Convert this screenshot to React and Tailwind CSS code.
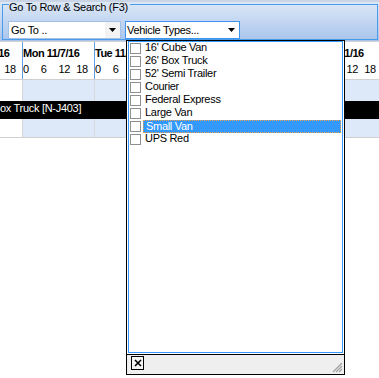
import { useState } from "react";

const days = ["Sun 11/6/16", "Mon 11/7/16", "Tue 11/8/16", "Wed 11/9/16", "Thu 11/10/16", "Fri 11/11/16", "Sat 11/12/16"];
const hours = ["0", "6", "12", "18"];
const vehicleTypes = ["16' Cube Van", "26' Box Truck", "52' Semi Trailer", "Courier", "Federal Express", "Large Van", "Small Van", "UPS Red"];

function Arrow() {
    return (
        <svg width="7" height="4" viewBox="0 0 7 4">
            <path d="M0 0h7L3.5 4z" fill="#000" />
        </svg>
    );
}

function DayStrip({ height }) {
    return (
        <div className={"flex -ml-[50px] " + height}>
            {days.map((d, i) => (
                <div
                    key={d}
                    className={
                        "w-[72px] shrink-0 border-l border-[#d9d9d9] " +
                        (i === 0 ? "bg-white" : "bg-[#dde9f8]")
                    }
                />
            ))}
        </div>
    );
}

export default function App() {
    const [selected, setSelected] = useState(6);
    const [checked, setChecked] = useState({});

    return (
        <div
            className="relative w-[379px] h-[378px] overflow-hidden bg-white text-[11px] tracking-[-0.3px] text-black"
            style={{ fontFamily: '"Liberation Sans", Arial, sans-serif' }}
        >
            {/* search panel */}
            <div className="h-[41px] border-t-2 border-[#c9d5e6] pt-[2px] bg-gradient-to-b from-[#dde8f7] to-[#a8c4ec]">
                <div className="ml-[2px] w-[376px] h-[36px] border-x border-b border-[#4a9be9]">
                    <div className="flex items-start h-[17px]">
                        <div className="w-[6px] border-t border-[#4a9be9]" />
                        <span className="-mt-[2px] leading-[11px] pr-[2px] whitespace-nowrap">Go To Row &amp; Search (F3)</span>
                        <div className="flex-1 border-t border-[#4a9be9]" />
                    </div>
                    <div className="flex gap-[4px] pl-[5px]">
                        <div className="w-[113px] h-[18px] flex bg-white border border-[#a3c0e6]">
                            <span className="flex-1 pl-[2px] leading-[16px]">Go To ..</span>
                            <div className="w-[15px] flex items-center justify-center bg-[#f3f3f3]">
                                <Arrow />
                            </div>
                        </div>
                        <div className="w-[115px] h-[18px] flex bg-white border border-[#3d95f0]">
                            <span className="flex-1 pl-[1px] leading-[16px]">Vehicle Types...</span>
                            <div className="w-[16px] flex items-center justify-center">
                                <Arrow />
                            </div>
                        </div>
                    </div>
                </div>
            </div>

            {/* scheduler header */}
            <div className="border-t border-b border-[#d0d0d0] overflow-hidden">
                <div className="flex -ml-[50px] h-[37px]">
                    {days.map((d, i) => (
                        <div key={d} className="w-[72px] shrink-0 border-l border-[#5b9de6] pt-[3px] whitespace-nowrap">
                            <div className={"leading-[16px] font-bold tracking-[-0.5px] " + (i === 0 ? "pl-[4px]" : "")}>{d}</div>
                            <div className="flex leading-[16px]">
                                {hours.map((h) => (
                                    <span key={h} className="w-[18px]">{h}</span>
                                ))}
                            </div>
                        </div>
                    ))}
                </div>
            </div>

            {/* resource row */}
            <div className="border-b border-[#d0d0d0] overflow-hidden">
                <DayStrip height="h-[21px]" />
                <div className="h-[18px] bg-black text-white leading-[15px] whitespace-nowrap -ml-[7px]">
                    Box Truck [N-J403]
                </div>
                <DayStrip height="h-[18px]" />
            </div>

            {/* vehicle types dropdown */}
            <div className="absolute left-[126px] top-[40px] w-[219px] h-[335px] border border-black bg-white flex flex-col">
                <div className="flex-1 px-[1px] pb-[1px] flex">
                    <div className="flex-1 border border-[#3399ff]">
                        {vehicleTypes.map((t, i) => (
                            <div key={t} className="h-[13px] flex items-center" onClick={() => setSelected(i)}>
                                <button
                                    className="ml-[1px] w-[11px] h-[11px] border border-[#8e8f8f] bg-white shrink-0"
                                    onClick={() => setChecked({ ...checked, [t]: !checked[t] })}
                                />
                                <div
                                    className={
                                        "ml-[2px] mr-[1px] flex-1 h-[13px] pl-[2px] leading-[11px] whitespace-nowrap " +
                                        (i === selected
                                            ? "bg-[#3399ff] text-white border border-dotted border-[#f0a04b] pl-[1px]"
                                            : "")
                                    }
                                >
                                    {t}
                                </div>
                            </div>
                        ))}
                    </div>
                </div>
                <div className="h-[20px] border-t border-black bg-[#efefef] flex items-start justify-between">
                    <button className="ml-[4px] mt-[1px] w-[13px] h-[14px] border border-black bg-[#f5f5f5] flex items-center justify-center">
                        <svg width="8" height="8" viewBox="0 0 8 8">
                            <path d="M1 1l6 6M7 1l-6 6" stroke="#000" strokeWidth="1.6" />
                        </svg>
                    </button>
                    <svg className="mt-[7px] mr-[1px]" width="11" height="11" viewBox="0 0 11 11">
                        <path d="M10 1L1 10M10 4L4 10M10 7L7 10" stroke="#a0a0a0" strokeWidth="1.2" />
                    </svg>
                </div>
            </div>
        </div>
    );
}
